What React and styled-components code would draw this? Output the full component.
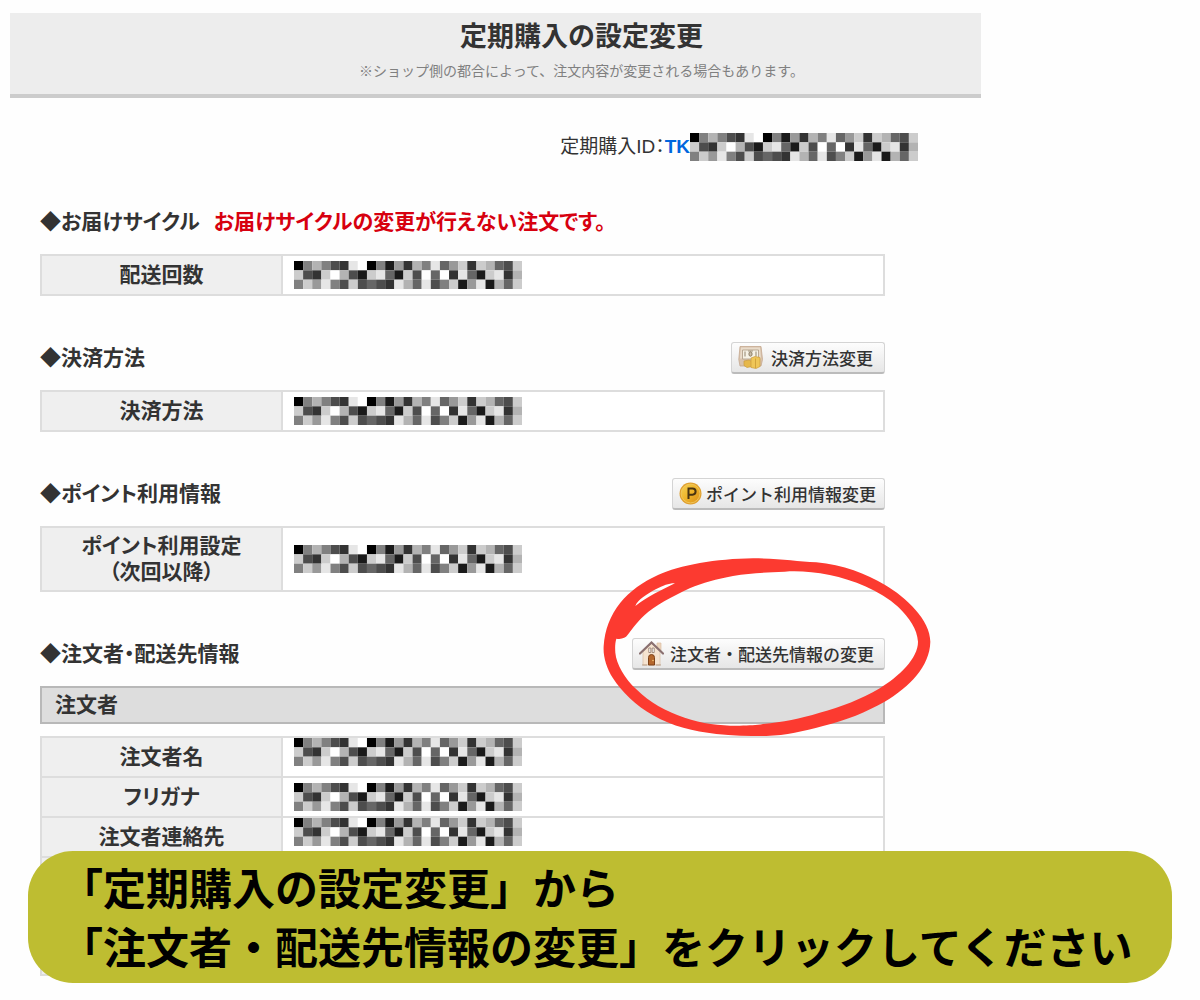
import React from "react"
import styled, { createGlobalStyle } from "styled-components"

const MOSAIC_ROWS = [
  "0575329a05162759468287438",
  "8328a731894183a4a29418927",
  "5869538343297493581691748",
]

function Mosaic() {
  return (
    <MosaicSvg viewBox="0 0 25 3" preserveAspectRatio="none" aria-hidden="true">
      {MOSAIC_ROWS.map((row, y) =>
        row.split("").map((level, x) => {
          const v = Math.round(parseInt(level, 16) * 25.5)
          return (
            <rect key={`${x}-${y}`} x={x} y={y} width="1" height="1" fill={`rgb(${v},${v},${v})`} />
          )
        })
      )}
    </MosaicSvg>
  )
}

function PaymentIcon() {
  return (
    <Icon viewBox="0 0 25 25" aria-hidden="true">
      <path d="M2 1.5h21l1.5 13-1.5 6.5H2L.8 14.5z" fill="#d9c3ac" stroke="#c4a78e" strokeWidth="0.8" />
      <path d="M3 2.5h19l1 11H2z" fill="#e9dccb" />
      <path d="M4.5 5h16v9h-16z" fill="#f6f2e6" stroke="#b3a28c" strokeWidth="0.9" />
      <path d="M7 6.5v5M18 6.5v5M10 6h5" stroke="#a39680" strokeWidth="1.2" fill="none" />
      <ellipse cx="12.5" cy="9" rx="1.6" ry="2.2" fill="#c9bda8" stroke="#85765f" strokeWidth="0.9" />
      <path d="M6 16l5-1 3 1.5v5l-5 1-3-2z" fill="#e6b84a" stroke="#cc9c3c" strokeWidth="0.7" />
      <path d="M13 13l4-1.5 5 1v9l-4 2-5-1z" fill="#efc657" stroke="#cc9c3c" strokeWidth="0.7" />
      <path d="M17.5 13.5v9.5" stroke="#c99a33" strokeWidth="0.8" fill="none" />
    </Icon>
  )
}

function PointIcon() {
  return (
    <Icon viewBox="0 0 25 25" aria-hidden="true">
      <defs>
        <linearGradient id="coin" x1="0" y1="0" x2="1" y2="1">
          <stop offset="0" stopColor="#f3cf55" />
          <stop offset="0.5" stopColor="#f0b429" />
          <stop offset="1" stopColor="#d98e1c" />
        </linearGradient>
      </defs>
      <circle cx="11.5" cy="12.5" r="11" fill="#e0a030" />
      <circle cx="11.5" cy="12.5" r="9.4" fill="url(#coin)" stroke="#f3cc62" strokeWidth="0.8" />
      <path d="M9.5 18V7.5h4a3 3 0 0 1 0 6.2h-4" fill="none" stroke="#4a3411" strokeWidth="2" />
    </Icon>
  )
}

function HouseIcon() {
  return (
    <Icon viewBox="0 0 25 25" aria-hidden="true">
      <path d="M18 2h4v8l-4-3z" fill="#ecd5bc" stroke="#dcbfa3" strokeWidth="0.7" />
      <path d="M4 10.5l8.500-8 8.500 8v13.500H4z" fill="#f5e3d0" stroke="#dcc3aa" strokeWidth="0.8" />
      <path d="M1 12.5L12.5 1.5 24 12.5" fill="none" stroke="#8a7070" strokeWidth="2.2" strokeLinecap="round" />
      <path d="M9.800 7h2v4.500h-2zM13.200 7h2v4.500h-2z" fill="#fff" stroke="#8f7768" strokeWidth="0.8" />
      <path d="M9.500 24v-7.500a3 3 0 0 1 6 0V24z" fill="#b5672c" stroke="#7d4219" strokeWidth="1" />
      <circle cx="14" cy="19.5" r="0.8" fill="#f2c879" />
      <path d="M3 24h5M17 24h5" stroke="#b9a08a" strokeWidth="1.2" />
    </Icon>
  )
}

function RedCircle() {
  return (
    <CircleSvg viewBox="40 54 984 534" aria-hidden="true">
      <path
        fill="#fc3a30"
        fillRule="evenodd"
        d="M490 55C570 56 620 64 680 67C760 74 830 102 885 134C950 172 1022 240 1022 305C1020 380 960 440 885 485C830 516 770 541 700 558C640 574 590 586 530 588C480 588 430 588 380 582C310 574 250 560 190 526C140 498 95 455 70 415C50 382 40 350 42 318C45 270 62 225 92 188C120 154 160 125 205 105C270 76 380 56 490 55Z
        M585 95C520 98 480 99 430 108C380 117 340 128 300 145C250 168 195 198 165 225C138 250 126 270 113 286C108 294 95 299 80 296C76 310 76 322 77 338C80 372 105 415 140 448C180 488 230 515 285 533C340 552 400 558 450 557C480 556 500 556 520 552C580 545 630 537 690 518C755 500 815 477 868 446C930 408 985 355 985 305C982 265 960 235 925 200C870 150 790 120 720 105C670 96 630 92 585 95Z
        M137 198C145 179 172 162 198 148C222 136 240 129 256 130C215 150 178 168 137 198Z"
      />
    </CircleSvg>
  )
}

function InfoTable({ children }) {
  return (
    <Table>
      <tbody>{children}</tbody>
    </Table>
  )
}

function InfoRow({ label, align }) {
  return (
    <tr>
      <Th scope="row">{label}</Th>
      <Td $align={align}>
        <Mosaic />
      </Td>
    </tr>
  )
}

export default function App() {
  return (
    <Page>
      <GlobalStyle />
      <Header>
        <Title>定期購入の設定変更</Title>
        <Note>※ショップ側の都合によって、注文内容が変更される場合もあります。</Note>
      </Header>
      <OrderId>
        <span>定期購入ID：</span>
        <IdLink href="#id">TK</IdLink>
        <Mosaic />
      </OrderId>
      <Sections>
        <section>
          <SectionHead>
            <Heading>
              ◆お届けサイクル<Warning>お届けサイクルの変更が行えない注文です。</Warning>
            </Heading>
          </SectionHead>
          <InfoTable>
            <InfoRow label="配送回数" />
          </InfoTable>
        </section>

        <section>
          <SectionHead>
            <Heading>◆決済方法</Heading>
            <Button type="button" $gap={8} $end={11}>
              <PaymentIcon />
              決済方法変更
            </Button>
          </SectionHead>
          <InfoTable>
            <InfoRow label="決済方法" />
          </InfoTable>
        </section>

        <section>
          <SectionHead>
            <Heading>◆ポイント利用情報</Heading>
            <Button type="button" $gap={2} $end={8}>
              <PointIcon />
              ポイント利用情報変更
            </Button>
          </SectionHead>
          <InfoTable>
            <InfoRow
              label={
                <>
                  ポイント利用設定
                  <br />
                  （次回以降）
                </>
              }
            />
          </InfoTable>
        </section>

        <section>
          <SectionHead>
            <Heading>◆注文者・配送先情報</Heading>
            <Button type="button" $gap={6} $end={10}>
              <HouseIcon />
              注文者・配送先情報の変更
            </Button>
            <RedCircle />
          </SectionHead>
          <SubHeading>注文者</SubHeading>
          <InfoTable>
            <InfoRow label="注文者名" align="top" />
            <InfoRow label="フリガナ" />
            <InfoRow label="注文者連絡先" align="top" />
            <TallRow>
              <Th scope="row" />
              <Td />
            </TallRow>
          </InfoTable>
        </section>
      </Sections>
      <Caption>
        「定期購入の設定変更」から
        <br />
        「注文者・配送先情報の変更」をクリックしてください
      </Caption>
    </Page>
  )
}

const GlobalStyle = createGlobalStyle`
  * {
    box-sizing: border-box;
  }
  body {
    margin: 0;
    background: #fefefe;
    color: #333;
    font-family: "Liberation Sans", "Noto Sans CJK JP", sans-serif;
  }
`

const Page = styled.main`
  position: relative;
  padding: 13px 10px 24px;
`

const Header = styled.header`
  max-width: 971px;
  padding: 6px 0 11px 172px;
  border-bottom: 4px solid #ccc;
  background: #ededed;
  text-align: center;
`

const Title = styled.h1`
  margin: 0;
  font-size: 27px;
  line-height: 36px;
  font-weight: 700;
`

const Note = styled.p`
  margin: 4px 0 0;
  color: #808080;
  font-size: 14px;
  line-height: 24px;
`

const OrderId = styled.div`
  display: flex;
  justify-content: flex-end;
  align-items: center;
  max-width: 971px;
  margin: 35px 0 45px;
  padding-right: 63px;
  font-size: 19px;
  line-height: 28px;
  font-feature-settings: "palt";
`

const IdLink = styled.a`
  color: #06d;
  font-weight: 700;
  text-decoration: none;
`

const MosaicSvg = styled.svg`
  display: block;
  width: 228px;
  height: 28px;
`

const Sections = styled.div`
  display: flex;
  flex-direction: column;
  gap: 46px;
  max-width: 971px;
  padding: 0 96px 0 30px;
`

const SectionHead = styled.div`
  position: relative;
  display: flex;
  justify-content: space-between;
  align-items: center;
  height: 32px;
  margin-bottom: 16px;
`

const Heading = styled.h2`
  margin: 0;
  font-size: 21px;
  line-height: 32px;
  font-weight: 700;
  font-feature-settings: "palt";
`

const Warning = styled.span`
  margin-left: 14px;
  color: #d7000f;
`

const Button = styled.button`
  display: flex;
  align-items: center;
  gap: ${({ $gap }) => $gap}px;
  height: 32px;
  padding: 0 ${({ $end }) => $end}px 0 6px;
  border: 1px solid #d4d4d4;
  border-bottom: 2px solid #bbb;
  border-radius: 3px;
  background: linear-gradient(#fdfdfd, #e6e6e6);
  color: #333;
  font-family: inherit;
  font-size: 17px;
  font-weight: 500;
  cursor: pointer;
`

const Icon = styled.svg`
  flex: none;
  width: 25px;
  height: 25px;
`

const CircleSvg = styled.svg`
  position: absolute;
  top: -80px;
  right: -46px;
  width: 328px;
  height: 178px;
  pointer-events: none;
`

const Table = styled.table`
  width: 100%;
  border-collapse: collapse;
  table-layout: fixed;
`

const Th = styled.th`
  width: 241px;
  height: 40px;
  padding: 5px 0;
  border: 2px solid #ddd;
  background: #efefef;
  font-size: 21px;
  line-height: 26px;
  font-weight: 700;
  font-feature-settings: "palt";
`

const Td = styled.td`
  padding: 0 11px;
  border: 2px solid #ddd;
  background: #fff;
  vertical-align: ${({ $align }) => $align || "middle"};
`

const TallRow = styled.tr`
  height: 118px;
`

const SubHeading = styled.h3`
  margin: 0 0 12px;
  padding: 0 13px;
  border: 2px solid #b8b8b8;
  background: #ddd;
  font-size: 21px;
  line-height: 34px;
  font-weight: 700;
`

const Caption = styled.p`
  position: absolute;
  right: 28px;
  bottom: 17px;
  left: 28px;
  margin: 0;
  padding: 10px 32px 4px;
  border-radius: 45px;
  background: #bebd31;
  color: #000;
  font-size: 43px;
  line-height: 59px;
  font-weight: 700;
`
